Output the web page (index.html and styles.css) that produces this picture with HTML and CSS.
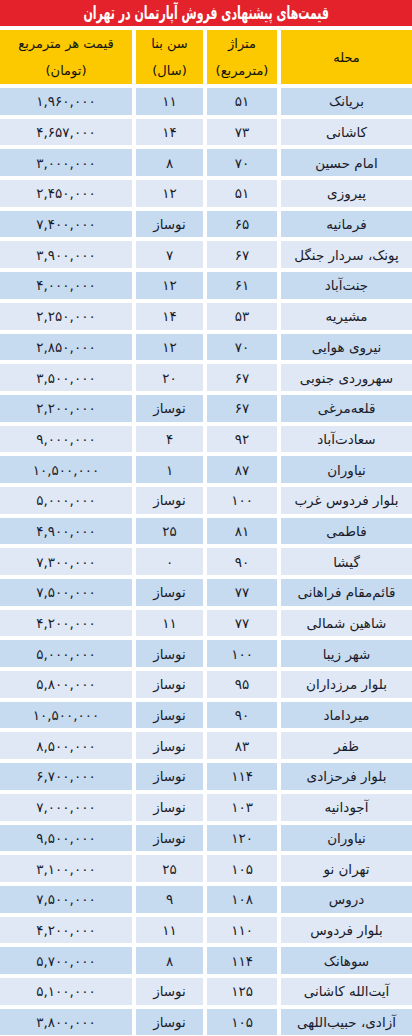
FILE: index.html
```html
<!DOCTYPE html>
<html lang="fa" dir="rtl">
<head>
<meta charset="utf-8">
<title>قیمت‌های پیشنهادی فروش آپارتمان در تهران</title>
<link rel="stylesheet" href="styles.css">
</head>
<body>
<div class="page">
  <div class="title"><span class="title-text">قیمت‌های پیشنهادی فروش آپارتمان در تهران</span></div>
  <div class="table">
    <div class="th th-name">محله</div>
    <div class="th">متراژ<br>(مترمربع)</div>
    <div class="th">سن بنا<br>(سال)</div>
    <div class="th">قیمت هر مترمربع<br>(تومان)</div>

    <div class="td a name">بریانک</div><div class="td a">۵۱</div><div class="td a">۱۱</div><div class="td a num">۱,۹۶۰,۰۰۰</div>
    <div class="td b name">کاشانی</div><div class="td b">۷۳</div><div class="td b">۱۴</div><div class="td b num">۴,۶۵۷,۰۰۰</div>
    <div class="td a name">امام حسین</div><div class="td a">۷۰</div><div class="td a">۸</div><div class="td a num">۳,۰۰۰,۰۰۰</div>
    <div class="td b name">پیروزی</div><div class="td b">۵۱</div><div class="td b">۱۲</div><div class="td b num">۲,۴۵۰,۰۰۰</div>
    <div class="td a name">فرمانیه</div><div class="td a">۶۵</div><div class="td a">نوساز</div><div class="td a num">۷,۴۰۰,۰۰۰</div>
    <div class="td b name">پونک، سردار جنگل</div><div class="td b">۶۷</div><div class="td b">۷</div><div class="td b num">۳,۹۰۰,۰۰۰</div>
    <div class="td a name">جنت‌آباد</div><div class="td a">۶۱</div><div class="td a">۱۲</div><div class="td a num">۴,۰۰۰,۰۰۰</div>
    <div class="td b name">مشیریه</div><div class="td b">۵۳</div><div class="td b">۱۴</div><div class="td b num">۲,۲۵۰,۰۰۰</div>
    <div class="td a name">نیروی هوایی</div><div class="td a">۷۰</div><div class="td a">۱۲</div><div class="td a num">۲,۸۵۰,۰۰۰</div>
    <div class="td b name">سهروردی جنوبی</div><div class="td b">۶۷</div><div class="td b">۲۰</div><div class="td b num">۳,۵۰۰,۰۰۰</div>
    <div class="td a name">قلعه‌مرغی</div><div class="td a">۶۷</div><div class="td a">نوساز</div><div class="td a num">۲,۲۰۰,۰۰۰</div>
    <div class="td b name">سعادت‌آباد</div><div class="td b">۹۲</div><div class="td b">۴</div><div class="td b num">۹,۰۰۰,۰۰۰</div>
    <div class="td a name">نیاوران</div><div class="td a">۸۷</div><div class="td a">۱</div><div class="td a num">۱۰,۵۰۰,۰۰۰</div>
    <div class="td b name">بلوار فردوس غرب</div><div class="td b">۱۰۰</div><div class="td b">نوساز</div><div class="td b num">۵,۰۰۰,۰۰۰</div>
    <div class="td a name">فاطمی</div><div class="td a">۸۱</div><div class="td a">۲۵</div><div class="td a num">۴,۹۰۰,۰۰۰</div>
    <div class="td b name">گیشا</div><div class="td b">۹۰</div><div class="td b">۰</div><div class="td b num">۷,۳۰۰,۰۰۰</div>
    <div class="td a name">قائم‌مقام فراهانی</div><div class="td a">۷۷</div><div class="td a">نوساز</div><div class="td a num">۷,۵۰۰,۰۰۰</div>
    <div class="td b name">شاهین شمالی</div><div class="td b">۷۷</div><div class="td b">۱۱</div><div class="td b num">۴,۲۰۰,۰۰۰</div>
    <div class="td a name">شهر زیبا</div><div class="td a">۱۰۰</div><div class="td a">نوساز</div><div class="td a num">۵,۰۰۰,۰۰۰</div>
    <div class="td b name">بلوار مرزداران</div><div class="td b">۹۵</div><div class="td b">نوساز</div><div class="td b num">۵,۸۰۰,۰۰۰</div>
    <div class="td a name">میرداماد</div><div class="td a">۹۰</div><div class="td a">نوساز</div><div class="td a num">۱۰,۵۰۰,۰۰۰</div>
    <div class="td b name">ظفر</div><div class="td b">۸۳</div><div class="td b">نوساز</div><div class="td b num">۸,۵۰۰,۰۰۰</div>
    <div class="td a name">بلوار فرحزادی</div><div class="td a">۱۱۴</div><div class="td a">نوساز</div><div class="td a num">۶,۷۰۰,۰۰۰</div>
    <div class="td b name">آجودانیه</div><div class="td b">۱۰۳</div><div class="td b">نوساز</div><div class="td b num">۷,۰۰۰,۰۰۰</div>
    <div class="td a name">نیاوران</div><div class="td a">۱۲۰</div><div class="td a">نوساز</div><div class="td a num">۹,۵۰۰,۰۰۰</div>
    <div class="td b name">تهران نو</div><div class="td b">۱۰۵</div><div class="td b">۲۵</div><div class="td b num">۳,۱۰۰,۰۰۰</div>
    <div class="td a name">دروس</div><div class="td a">۱۰۸</div><div class="td a">۹</div><div class="td a num">۷,۵۰۰,۰۰۰</div>
    <div class="td b name">بلوار فردوس</div><div class="td b">۱۱۰</div><div class="td b">۱۱</div><div class="td b num">۴,۲۰۰,۰۰۰</div>
    <div class="td a name">سوهانک</div><div class="td a">۱۱۴</div><div class="td a">۸</div><div class="td a num">۵,۷۰۰,۰۰۰</div>
    <div class="td b name">آیت‌الله کاشانی</div><div class="td b">۱۲۵</div><div class="td b">نوساز</div><div class="td b num">۵,۱۰۰,۰۰۰</div>
    <div class="td a name">آزادی، حبیب‌اللهی</div><div class="td a">۱۰۵</div><div class="td a">نوساز</div><div class="td a num">۳,۸۰۰,۰۰۰</div>
  </div>
</div>
</body>
</html>
```

FILE: styles.css
```css
html, body {
  margin: 0;
  padding: 0;
  background: #ffffff;
}
body {
  font-family: "DejaVu Sans", "Noto Sans", sans-serif;
  color: #1b1b2a;
}
.page {
  width: 412px;
  height: 1036px;
  overflow: hidden;
}
.title {
  height: 26px;
  background: #e4222b;
  color: #ffffff;
  font-weight: bold;
  font-size: 18px;
  line-height: 26px;
  text-align: center;
  margin-bottom: 4px;
  white-space: nowrap;
}
.title-text {
  display: inline-block;
  transform: scaleX(0.61);
}
.table {
  display: grid;
  grid-template-columns: 131px 70px 67px 132px;
  grid-template-rows: 54px;
  grid-auto-rows: 26.7px;
  column-gap: 4px;
  row-gap: 4px;
}
.th {
  background: #fcc900;
  display: flex;
  align-items: center;
  justify-content: center;
  text-align: center;
  font-size: 13px;
  line-height: 27px;
  color: #111111;
}
.td {
  display: flex;
  align-items: center;
  justify-content: center;
  font-size: 13.5px;
  white-space: nowrap;
}
.td.a {
  background: #c6daf0;
}
.td.b {
  background: #dfe8f4;
}
.num {
  letter-spacing: 0.5px;
}
```
